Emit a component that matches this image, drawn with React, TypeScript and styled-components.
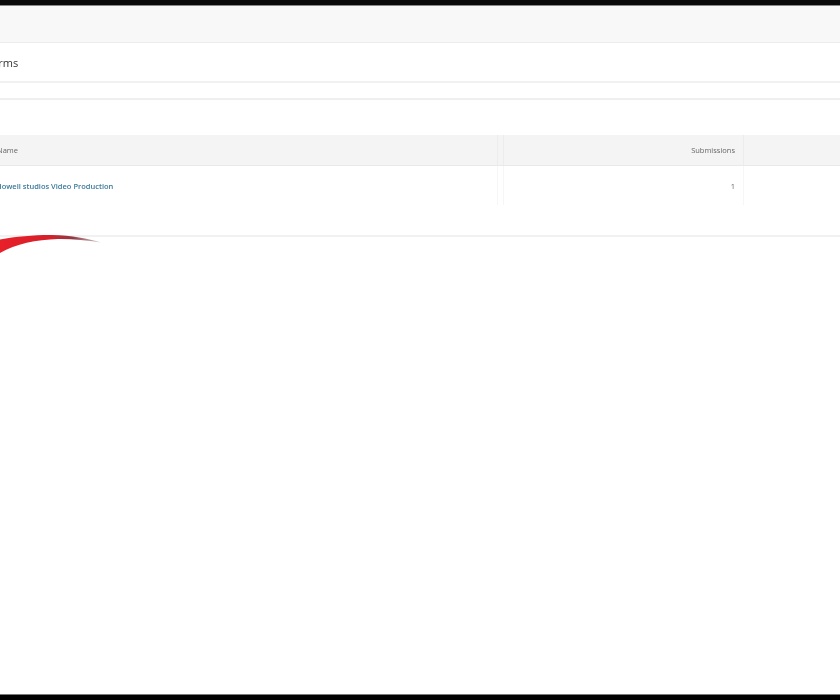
import React from "react";
import styled, { createGlobalStyle } from "styled-components";

const GlobalStyle = createGlobalStyle`
  html, body {
    margin: 0;
    padding: 0;
    background: #fff;
    overflow: hidden;
  }
  body {
    font-family: "Open Sans", "Liberation Sans", sans-serif;
  }
`;

const Page = styled.div`
  position: relative;
  width: 840px;
  height: 700px;
  display: flex;
  flex-direction: column;
  overflow: hidden;
  background: #fff;
`;

const TopEdge = styled.div`
  height: 5px;
  background: #0a0a0a;
  border-bottom: 1px solid #8a8a8a;
`;

const NavBand = styled.div`
  height: 36px;
  background: #f8f8f8;
  border-bottom: 1px solid #ececec;
`;

const TitleBar = styled.div`
  height: 38px;
  display: flex;
  align-items: center;
  background: #fff;
  border-bottom: 2px solid #f1f1f1;
`;

const Title = styled.h1`
  margin: 0 0 0 -14px;
  font-size: 11px;
  font-weight: 400;
  color: #333;
  filter: blur(0.5px);
`;

const Spacer = styled.div`
  height: 15px;
  border-bottom: 2px solid #efefef;
`;

const Panel = styled.section`
  height: 137px;
  padding-top: 35px;
  box-sizing: border-box;
  border-bottom: 2px solid #f1f1f1;
`;

const Cell = styled.div<{ $right?: boolean; $last?: boolean }>`
  display: flex;
  align-items: center;
  justify-content: ${(p) => (p.$right ? "flex-end" : "flex-start")};
  padding-right: ${(p) => (p.$right ? "8px" : "0")};
  margin-left: ${(p) => (p.$right ? "5px" : "0")};
  border-left: ${(p) => (p.$right ? "1px solid #f3f3f3" : "0")};
  border-right: ${(p) => (p.$last ? "0" : "1px solid #eeeeee")};
  font-size: 7.5px;
  color: #666;
  min-width: 0;
`;

const Columns = styled.div<{ $head?: boolean }>`
  display: grid;
  grid-template-columns: 498px 246px 1fr;
  height: ${(p) => (p.$head ? "30px" : "39px")};
  background: ${(p) => (p.$head ? "#f4f4f4" : "#fff")};
  border-bottom: ${(p) => (p.$head ? "1px solid #e9e9e9" : "0")};

  ${Cell} {
    border-color: ${(p) => (p.$head ? "#ececec" : "#f6f6f6")};
  }
`;

const CellText = styled.span`
  filter: blur(0.45px);
`;

const NameText = styled(CellText)`
  margin-left: -3px;
  white-space: nowrap;
`;

const FormLink = styled.a`
  margin-left: -4px;
  white-space: nowrap;
  font-size: 7.5px;
  font-weight: 600;
  color: #3a7a9c;
  text-decoration: none;
  filter: blur(0.45px);
`;

const Fill = styled.div`
  flex: 1;
`;

const BottomEdge = styled.div`
  height: 5px;
  background: #000;
  border-top: 1px solid #7a7a7a;
`;

const Swoosh = styled.svg`
  position: absolute;
  left: 0;
  top: 230px;
  width: 110px;
  height: 30px;
  filter: blur(0.5px);
`;

export default function App() {
  return (
    <Page>
      <GlobalStyle />
      <TopEdge />
      <NavBand />
      <TitleBar>
        <Title>Forms</Title>
      </TitleBar>
      <Spacer />
      <Panel>
        <Columns $head>
          <Cell>
            <NameText>Name</NameText>
          </Cell>
          <Cell $right>
            <CellText>Submissions</CellText>
          </Cell>
          <Cell $last />
        </Columns>
        <Columns>
          <Cell>
            <FormLink href="#">Howell studios Video Production</FormLink>
          </Cell>
          <Cell $right>
            <CellText>1</CellText>
          </Cell>
          <Cell $last />
        </Columns>
      </Panel>
      <Fill />
      <BottomEdge />
      <Swoosh viewBox="0 0 110 30" aria-hidden="true">
        <defs>
          <linearGradient id="swooshFill" x1="0" x2="1" y1="0" y2="0">
            <stop offset="0" stopColor="#e8202a" />
            <stop offset="0.5" stopColor="#d5202a" />
            <stop offset="0.72" stopColor="#8e3a44" />
            <stop offset="1" stopColor="#d8d0d2" />
          </linearGradient>
        </defs>
        <path
          d="M0 9.5 C16 6.5 36 4.8 52 5 C72 5.4 88 8.5 101 12.5 C86 10 72 8.8 58 9 C36 9.5 16 14 0 23 Z"
          fill="url(#swooshFill)"
        />
      </Swoosh>
    </Page>
  );
}
